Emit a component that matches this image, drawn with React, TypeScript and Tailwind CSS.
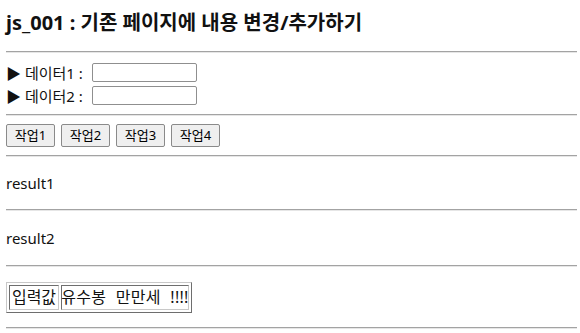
import React from "react";

function Hr() {
  return <div className="h-[2px] border-t border-t-[#a3a3a3] border-b border-b-[#e6e6e6]" />;
}

export default function App() {
  const btns = ["작업1", "작업2", "작업3", "작업4"];
  return (
    <div className="w-[580px] h-[333px] bg-white pl-[6px] pr-[3px] text-[#111] [font-family:'Noto_Sans','Noto_Sans_CJK_KR',sans-serif] overflow-hidden">
      <div className="pt-[11px] h-[51px]">
        <h3 className="text-[20px] leading-[24px] font-bold">
          js_001 : 기존 페이지에 내용 변경/추가하기
        </h3>
      </div>
      <Hr />
      <div className="mt-[8px] flex flex-col text-[15px]">
        {["데이터1", "데이터2"].map((d) => (
          <div key={d} className="flex items-center h-[23px]">
            <span className="leading-[20px] whitespace-pre">▶ {d} : </span>
            <input
              className="ml-[5px] w-[105px] h-[19px] border border-[#8f8f8f] rounded-[2px] bg-white outline-none"
              type="text"
            />
          </div>
        ))}
      </div>
      <div className="mt-[7px]">
        <Hr />
      </div>
      <div className="mt-[8px] flex gap-[6px] h-[23px]">
        {btns.map((b) => (
          <button
            key={b}
            className="w-[49px] h-[23px] bg-[#efefef] border border-[#8a8a8a] rounded-[2px] text-[13px] leading-[21px] text-black"
          >
            {b}
          </button>
        ))}
      </div>
      <div className="mt-[8px]">
        <Hr />
      </div>
      <p className="mt-[16px] h-[21px] text-[15px] leading-[21px]">result1</p>
      <div className="mt-[15px]">
        <Hr />
      </div>
      <p className="mt-[17px] h-[21px] text-[15px] leading-[21px]">result2</p>
      <div className="mt-[16px]">
        <Hr />
      </div>
      <div className="mt-[15px] flex">
        <div className="flex gap-[2px] p-[2px] border border-t-[#c8c8c8] border-l-[#c8c8c8] border-r-[#6e6e6e] border-b-[#6e6e6e]">
          <div className="w-[50px] flex items-center justify-center h-[25px] border border-t-[#6e6e6e] border-l-[#6e6e6e] border-r-[#c8c8c8] border-b-[#c8c8c8] text-[16px] leading-[23px]">
            입력값
          </div>
          <div className="w-[128px] flex items-center justify-center h-[25px] border border-t-[#6e6e6e] border-l-[#6e6e6e] border-r-[#c8c8c8] border-b-[#c8c8c8] text-[16px] leading-[23px] whitespace-pre [word-spacing:5px] tracking-[0.3px]">
            유수봉 만만세 !!!!
          </div>
        </div>
      </div>
      <div className="mt-[14px]">
        <Hr />
      </div>
    </div>
  );
}
